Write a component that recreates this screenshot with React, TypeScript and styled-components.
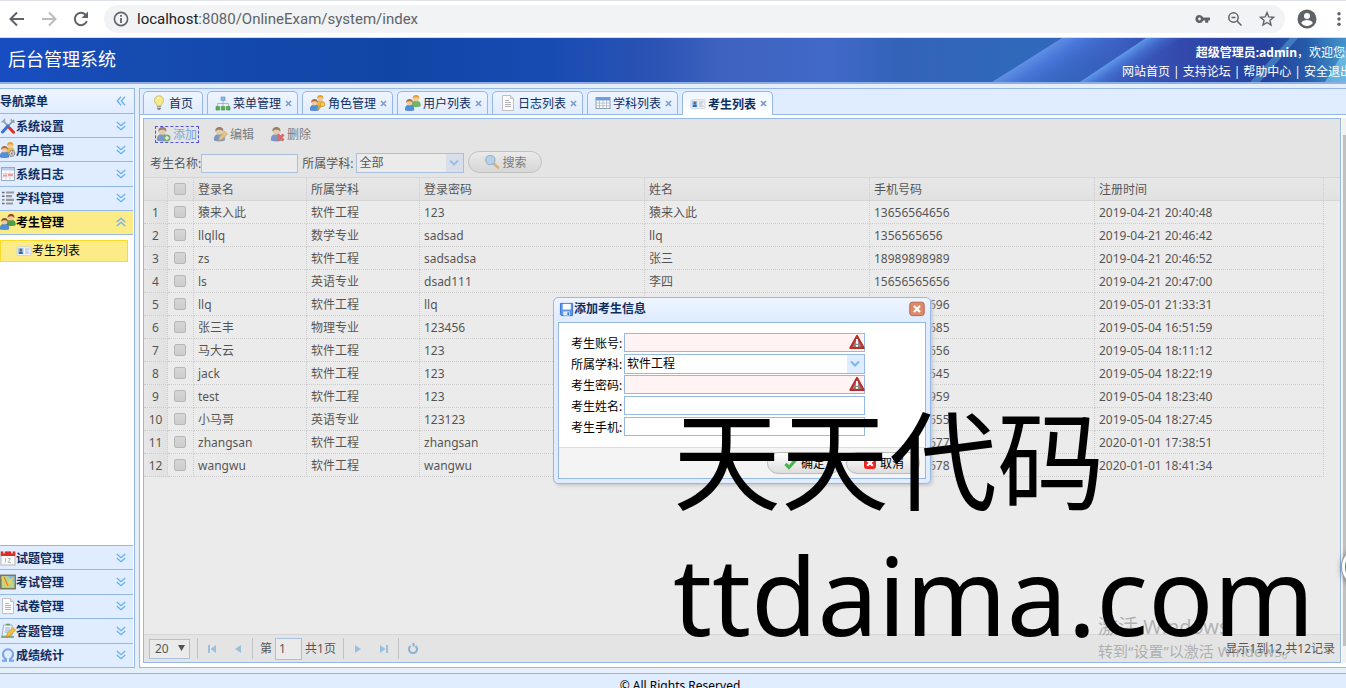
import React from "react";
import styled, { createGlobalStyle, css } from "styled-components";

const GlobalStyle = createGlobalStyle`
  * { box-sizing: border-box; }
  html, body { margin: 0; overflow: hidden; }
  body {
    font: 12px/18px "Noto Sans", "Noto Sans CJK SC", sans-serif;
    color: #000;
    background: #e6eef8;
  }
  button, input, select { font: inherit; color: inherit; margin: 0; padding: 0; }
  button { background: none; border: 0; cursor: pointer; white-space: nowrap; }
  a { color: inherit; text-decoration: none; }
  svg { display: block; flex: none; }
`;

const BLUE = "#95b8e7";

const Screen = styled.div`
  position: relative;
  height: 100vh;
  overflow: hidden;
`;
const Page = styled.div`
  display: flex;
  flex-direction: column;
  width: calc(100% + 14px);
  height: calc(100vh + 15px);
`;
const Caption = styled.span`
  padding-top: 2px;
`;

/* ---------- browser bar ---------- */
const BrowserBar = styled.div`
  display: flex;
  align-items: center;
  flex: none;
  height: 38px;
  padding: 0 19px 0 8px;
  background: #fff;
  border-top: 1px solid #dee1e6;
  border-bottom: 1px solid #dadce0;
  color: #5f6368;
`;
const NavButton = styled.button<{ $dim?: boolean }>`
  width: 32px;
  display: flex;
  justify-content: flex-start;
  color: ${(p) => (p.$dim ? "#babcbe" : "#5f6368")};
`;
const AddressBar = styled.div`
  flex: 1;
  display: flex;
  align-items: center;
  height: 28px;
  margin-right: 12px;
  padding: 0 9px;
  border-radius: 14px;
  background: #f1f3f4;
`;
const Url = styled.span`
  flex: 1;
  margin-left: 8px;
  font: 15px/20px Roboto, sans-serif;
  color: #5f6368;
  b { font-weight: 400; color: #202124; }
`;
const BarIcon = styled.span`
  width: 18px;
  margin-left: 14px;
`;
const Profile = styled.button`
  margin-right: 18px;
`;

/* ---------- header ---------- */
const Header = styled.header`
  position: relative;
  flex: none;
  display: flex;
  justify-content: space-between;
  height: 46px;
  padding: 5px 8px 0 8px;
  color: #fff;
  border-bottom: 2px solid #8eafe4;
  overflow: hidden;
  background: #1547ad;
`;
const HeaderArt = styled.svg`
  position: absolute;
  inset: 0;
  width: 100%;
  height: 100%;
`;
const SiteTitle = styled.h1`
  position: relative;
  margin: 0;
  font-size: 18px;
  line-height: 32px;
  font-weight: 400;
`;
const HeaderInfo = styled.div`
  position: relative;
  text-align: right;
  line-height: 19px;
  white-space: nowrap;
`;
const Welcome = styled.div`
  margin-right: 7px;
`;
const Links = styled.nav`
  display: flex;
  justify-content: flex-end;
  a + a::before { content: "|"; margin: 0 3px; }
`;

/* ---------- main ---------- */
const Main = styled.div`
  flex: 1;
  min-height: 0;
  display: flex;
  gap: 4px;
  padding: 4px 0 5px;
`;
const Sidebar = styled.aside`
  flex: none;
  width: 135px;
  display: flex;
  flex-direction: column;
  background: #fff;
  border: solid ${BLUE};
  border-width: 1px 1px 1px 0;
`;
const SidebarTitle = styled.div`
  display: flex;
  align-items: center;
  justify-content: space-between;
  height: 25px;
  padding-right: 8px;
  font-weight: 700;
  color: #0e2d5f;
  background: linear-gradient(#eff5ff, #e0ecff);
  border-bottom: 1px solid ${BLUE};
`;
const MenuGroup = styled.div<{ $bottom?: boolean }>`
  display: grid;
  grid-auto-rows: 1fr;
  height: ${(p) => (p.$bottom ? "122px" : "121px")};
  margin-right: 1px;
  ${(p) => p.$bottom && css`margin-top: auto;`}
`;
const MenuItem = styled.button<{ $open?: boolean; $bottom?: boolean }>`
  display: flex;
  align-items: center;
  padding-right: 7px;
  font-weight: 700;
  color: ${(p) => (p.$open ? "#000" : "#0e2d5f")};
  background: ${(p) => (p.$open ? "#fbec88" : "#e0ecff")};
  border: 0 solid ${BLUE};
  ${(p) => (p.$bottom ? "border-top-width: 1px;" : "border-bottom-width: 1px;")}
  > span { flex: 1; text-align: left; }
`;
const SubItem = styled.a`
  display: flex;
  align-items: center;
  height: 22px;
  margin: 5px 6px 0 0;
  padding-left: 15px;
  background: #fbec88;
  border: 1px solid #fcdc28;
`;

const Content = styled.main`
  flex: 1;
  min-width: 0;
  display: flex;
  flex-direction: column;
  background: #fff;
  border: 1px solid ${BLUE};
`;
const TabStrip = styled.div`
  flex: none;
  display: flex;
  align-items: flex-end;
  gap: 4px;
  height: 26px;
  padding-left: 3px;
  background: #e0ecff;
  border-bottom: 1px solid ${BLUE};
`;
const Tab = styled.div<{ $active?: boolean; $home?: boolean }>`
  display: flex;
  align-items: center;
  width: ${(p) => (p.$home ? "60px" : "91px")};
  height: 23px;
  padding-left: 7px;
  border: 1px solid ${BLUE};
  border-bottom: 0;
  border-radius: 5px 5px 0 0;
  color: #0e2d5f;
  background: linear-gradient(#eff5ff, #e0ecff);
  ${(p) =>
    p.$active &&
    css`
      height: 24px;
      margin-bottom: -1px;
      font-weight: 700;
      background: linear-gradient(#eff5ff, #fff);
    `}
`;
const TabName = styled.button`
  display: flex;
  align-items: center;
  gap: 2px;
  font-weight: inherit;
`;
const TabClose = styled.button`
  width: 14px;
  display: flex;
  justify-content: center;
`;
const TabBody = styled.div`
  flex: 1;
  min-height: 0;
  display: flex;
  gap: 1px;
  padding: 3px 0 4px 3px;
`;
const Frame = styled.section`
  position: relative;
  flex: 1;
  min-width: 0;
  display: flex;
  flex-direction: column;
  border: 1px solid ${BLUE};
`;
const ScrollTrack = styled.div`
  width: 17px;
  padding: 17px 1px;
  background: #f1f1f1;
`;
const ScrollThumb = styled.div`
  height: 100%;
  background: #c1c1c1;
`;

/* ---------- toolbar ---------- */
const Toolbar = styled.div`
  flex: none;
  height: 59px;
  padding: 6px 6px 0;
  background: #f4f4f4;
  border-bottom: 1px solid #ddd;
`;
const ToolRow = styled.div`
  display: flex;
  align-items: center;
  height: 18px;
  padding-left: 5px;
  gap: 13px;
`;
const ToolButton = styled.button<{ $focus?: boolean }>`
  display: flex;
  align-items: center;
  gap: 2px;
  height: 17px;
  padding-right: 2px;
  color: ${(p) => (p.$focus ? "#3f8af0" : "#444")};
  outline: ${(p) => (p.$focus ? "1px dashed #0000e0" : "none")};
  outline-offset: -1px;
`;
const SearchRow = styled.form`
  display: flex;
  align-items: center;
  height: 22px;
  margin-top: 8px;
  label { padding-top: 3px; }
  input + label { margin: 0 3px 0 4px; }
`;
const SearchInput = styled.input`
  width: 97px;
  height: 19px;
  margin-top: 2px;
  padding: 0 2px;
  background: #fff;
  border: 1px solid ${BLUE};
`;
const SelectBox = styled.span<{ $wide?: boolean }>`
  display: flex;
  position: relative;
  width: ${(p) => (p.$wide ? "241px" : "108px")};
  height: 20px;
  margin-top: ${(p) => (p.$wide ? "0" : "2px")};
  background: linear-gradient(to left, #e0ecff 17px, #fff 17px);
  border: 1px solid ${BLUE};
  select {
    appearance: none;
    width: 100%;
    padding-left: 2px;
    border: 0;
    background: none;
    outline: 0;
  }
  svg { position: absolute; right: 3px; top: 5px; pointer-events: none; }
`;
const PillButton = styled.button`
  display: flex;
  align-items: center;
  justify-content: center;
  gap: 2px;
  width: 74px;
  height: 22px;
  margin-left: 4px;
  color: #444;
  border: 1px solid #bbb;
  border-radius: 11px;
  background: linear-gradient(#fff, #ddd);
`;

/* ---------- grid ---------- */
const GridArea = styled.div`
  flex: 1;
  min-height: 0;
  overflow: hidden;
`;
const Table = styled.table`
  width: 100%;
  table-layout: fixed;
  border-collapse: separate;
  border-spacing: 0;
  th, td {
    height: 23px;
    padding: 2px 3px 0 4px;
    text-align: left;
    font-weight: 400;
    line-height: 18px;
    white-space: nowrap;
    border: 0 dotted #ccc;
    border-width: 0 1px 1px 0;
  }
  th {
    background: linear-gradient(#f9f9f9, #efefef);
    border-bottom: 1px solid #ddd;
  }
  td:first-child { padding: 2px 0 0; text-align: center; background: linear-gradient(to right, #f9f9f9, #efefef); }
  th:nth-child(2), td:nth-child(2) { padding: 0 2px 0 0; }
  td:last-child { border: 0; }
  th:last-child { border-right: 0; }
`;
const Check = styled.input`
  && {
    display: block;
    appearance: none;
    width: 12px;
    height: 12px;
    margin: -1px auto 0;
    border: 1px solid #a9a9a9;
    border-radius: 2px;
    background: linear-gradient(#dcdcdc, #cdcdcd);
  }
`;

/* ---------- pager ---------- */
const Pager = styled.div`
  flex: none;
  display: flex;
  align-items: center;
  height: 28px;
  padding: 0 5px;
  background: #f4f4f4;
  border-top: 1px solid #ddd;
`;
const PageSize = styled.span`
  position: relative;
  margin-right: 6px;
  select {
    appearance: none;
    display: block;
    width: 41px;
    height: 20px;
    padding-left: 5px;
    border: 1px solid ${BLUE};
    background: #fff;
  }
  svg { position: absolute; right: 5px; top: 6px; pointer-events: none; }
`;
const Divider = styled.i`
  width: 1px;
  height: 21px;
  margin: 0 1px;
  background: #bbb;
`;
const PagerButton = styled.button`
  display: flex;
  justify-content: center;
  width: 26px;
`;
const PagerText = styled.label`
  display: flex;
  align-items: center;
  gap: 3px;
  padding: 0 6px;
`;
const PageInput = styled.input`
  && {
    width: 27px;
    height: 22px;
    padding: 0 3px;
    border: 1px solid ${BLUE};
    background: #fff;
  }
`;
const PageInfo = styled.span`
  margin-left: auto;
`;

/* ---------- dialog ---------- */
const Mask = styled.div`
  position: absolute;
  inset: 0;
  background: rgba(204, 204, 204, 0.4);
`;
const DialogLayer = styled.div`
  position: absolute;
  inset: 0;
  display: flex;
  align-items: center;
  justify-content: center;
`;
const Dialog = styled.div`
  width: 378px;
  padding: 4px;
  border: 1px solid ${BLUE};
  border-radius: 5px;
  background: linear-gradient(#eff5ff, #e0ecff 20px);
  box-shadow: 2px 2px 3px #ccc;
`;
const DialogTitle = styled.div`
  display: flex;
  align-items: center;
  justify-content: space-between;
  height: 20px;
  padding: 0 1px 6px;
  font-weight: 700;
  color: #0e2d5f;
  > span { display: flex; align-items: center; }
`;
const DialogBody = styled.form`
  border: 1px solid ${BLUE};
  background: #fff;
`;
const Fields = styled.div`
  padding: 9px 0 0 12px;
  height: 124px;
`;
const Field = styled.div`
  display: flex;
  align-items: center;
  height: 21px;
  label { width: 53px; flex: none; line-height: 20px; padding-top: 2px; }
`;
const FieldBox = styled.span`
  position: relative;
  display: flex;
  svg { position: absolute; right: 0; top: 1px; }
`;
const FieldInput = styled.input<{ $invalid?: boolean }>`
  width: 241px;
  height: 19px;
  padding: 0 2px;
  border: 1px solid ${BLUE};
  background: ${(p) => (p.$invalid ? "#fff3f3" : "#fff")};
`;
const DialogButtons = styled.div`
  display: flex;
  justify-content: flex-end;
  gap: 1px;
  height: 31px;
  padding: 4px 5px 0;
  background: #f4f4f4;
  border-top: 1px solid #ddd;
  button { color: #000; }
`;

const Footer = styled.footer`
  flex: none;
  height: 30px;
  padding-top: 3px;
  text-align: center;
  background: #e0ecff;
  border-top: 1px solid ${BLUE};
`;

/* ---------- overlays ---------- */
const ActivateNote = styled.div`
  position: absolute;
  right: 46px;
  bottom: 26px;
  width: 202px;
  color: rgba(120, 120, 120, 0.5);
  font-size: 15px;
  line-height: 22px;
  white-space: nowrap;
  pointer-events: none;
  strong { display: block; font-weight: 400; font-size: 20px; line-height: 26px; }
`;
const BigMark = styled.div`
  position: absolute;
  left: 673px;
  top: 394px;
  font-size: 108px;
  line-height: 134px;
  white-space: nowrap;
  pointer-events: none;
`;
const FloatBall = styled.div`
  position: absolute;
  right: -36px;
  top: 547px;
  width: 40px;
  height: 40px;
  border-radius: 50%;
  border: 3px solid #fff;
  background: #1fa463;
  box-shadow: 0 0 0 1px #999, 0 1px 6px rgba(0, 0, 0, 0.5);
`;

/* ---------- icons ---------- */
type IconName =
  | "bulb" | "sitemap" | "userkey" | "users" | "page" | "table" | "card" | "tools"
  | "usergear" | "calendarlog" | "list" | "couple" | "calendar" | "map" | "note"
  | "omega" | "useradd" | "useredit" | "userdel" | "search" | "save" | "ok" | "cancel" | "warn";

const person = (x: number, y: number, hair: string, body: string, k = 1) => (
  <g transform={`translate(${x} ${y}) scale(${k})`}>
    <path d="M0 11c0-4 1.500-5 4.500-5S9 7 9 11c-2 1.200-7 1.200-9 0z" fill={body} stroke="#0003" strokeWidth=".6" />
    <circle cx="4.500" cy="3.600" r="2.900" fill="#f3c99a" />
    <path d="M1.200 4C.8 1.200 2.500 0 4.500 0s3.800 1.200 3.300 4C7 2.500 5.500 2.300 4.500 2.300S2 2.500 1.200 4z" fill={hair} />
  </g>
);

const drawings: Record<IconName, React.ReactNode> = {
  bulb: (
    <>
      <path d="M8 .8a4.600 4.600 0 0 0-4.600 4.600c0 2.400 2.300 3.300 2.600 5.600h4c.3-2.300 2.600-3.200 2.600-5.600A4.600 4.600 0 0 0 8 .8z" fill="#f6e98a" stroke="#c9b552" strokeWidth=".8" />
      <path d="M6.300 4c.3-1 1-1.500 2-1.600" stroke="#fff" strokeWidth="1.200" fill="none" />
      <path d="M6 11.300h4v2.400L8.800 15H7.200L6 13.700z" fill="#8e8e8e" />
      <path d="M6 12.500h4" stroke="#ddd" strokeWidth=".7" />
    </>
  ),
  sitemap: (
    <>
      <path d="M8 5v4M2.500 11V8.500h11V11M8 8v3" stroke="#9aa9ba" strokeWidth=".8" fill="none" />
      <rect x="6" y="2" width="4" height="3.500" fill="#8fb4e4" stroke="#7098cc" strokeWidth=".7" />
      <path d="M1 11.500h3.500V15H1zM6.300 11.500h3.500V15H6.300zM11.500 11.500H15V15h-3.500z" fill="#5bb052" stroke="#3c8a38" strokeWidth=".6" />
    </>
  ),
  userkey: (
    <>
      {person(6, 0, "#e0a22c", "#e8b84a", 0.95)}
      {person(0, 4, "#a8703c", "#4f8fe0")}
      <path d="M7.500 14.500l4.500-4.700" stroke="#d99e22" strokeWidth="2" />
      <circle cx="12.600" cy="9.300" r="2.200" fill="#f7cf50" stroke="#d99e22" />
    </>
  ),
  users: (
    <>
      {person(6.500, 0, "#e0a22c", "#6cba60", 1)}
      {person(0, 4, "#a8703c", "#4f8fe0")}
    </>
  ),
  page: (
    <>
      <path d="M2.500.5h8l3 3v12h-11z" fill="#fbfbfb" stroke="#c0c0c0" />
      <path d="M10.500.5v3h3" fill="#e4e4e4" stroke="#c0c0c0" />
      <path d="M5 5.500h4M5 7.500h6M5 9.500h6M5 11.500h6" stroke="#b5b5b5" />
    </>
  ),
  table: (
    <>
      <rect x="1" y="2.500" width="14" height="11" fill="#fff" stroke="#8d9db5" />
      <path d="M1 2.500h14v3H1z" fill="#6f9bd8" />
      <path d="M1 8h14M1 10.700h14M4.500 5.500v8M8 5.500v8M11.500 5.500v8" stroke="#a9b3c4" strokeWidth=".8" />
    </>
  ),
  card: (
    <>
      <rect x="1" y="3.800" width="14" height="8.600" rx="1" fill="#f3f5f9" stroke="#c3cbd6" strokeWidth=".8" />
      <rect x="2.200" y="5" width="5.200" height="6" fill="#8dbdf2" />
      <circle cx="4.800" cy="7" r="1.300" fill="#8a5a3a" />
      <path d="M2.800 11c0-1.800.9-2.400 2-2.400s2 .6 2 2.400z" fill="#2f66b4" />
      <path d="M9 6h4.500M9 8h3.500M9 10h4.500" stroke="#a5afbc" strokeWidth=".9" />
    </>
  ),
  tools: (
    <>
      <path d="M3 2.500l9.500 10.500" stroke="#9aa5b0" strokeWidth="2" />
      <path d="M1.500 3.500a2.200 2.200 0 0 0 3-2.700" stroke="#98a4ae" strokeWidth="1.500" fill="none" />
      <path d="M9.500 10l4 4.200" stroke="#d8302e" strokeWidth="3" strokeLinecap="round" />
      <path d="M14 2L8.500 7.500" stroke="#8593a0" strokeWidth="1.600" />
      <path d="M8 8l-5.500 6" stroke="#3a6fd0" strokeWidth="3" strokeLinecap="round" />
      <path d="M11.500 1c-1 2 1 3.800 3.200 2.800" stroke="#98a4ae" strokeWidth="1.500" fill="none" />
    </>
  ),
  usergear: (
    <>
      {person(6, 0, "#e0a22c", "#e8b84a", 0.95)}
      {person(0, 4, "#a8703c", "#4f8fe0")}
      <circle cx="11.800" cy="11.500" r="2.800" fill="#ddd" stroke="#888" strokeWidth="1.400" strokeDasharray="1.500 .7" />
      <circle cx="11.800" cy="11.500" r="1" fill="#777" />
    </>
  ),
  calendarlog: (
    <>
      <rect x="1.500" y="1.500" width="13" height="13" fill="#fff" stroke="#9dabc0" />
      <path d="M2 2h12v2.500H2z" fill="#b9cdea" />
      <path d="M2 7.500h12M2 11h12M6 5v9M10 5v9" stroke="#d3d9e2" />
      <path d="M3 8.500h4v2H3zM8 8h5v2H8z" fill="#f29a9a" />
    </>
  ),
  list: (
    <>
      <path d="M2 2.500h2.500M2 6.200h2.500M2 9.900h2.500M2 13.500h2.500" stroke="#666" strokeWidth="1.400" />
      <path d="M6 2.500h8M6 6.200h6M6 9.900h8M6 13.500h7" stroke="#999" strokeWidth="2.200" />
    </>
  ),
  couple: (
    <>
      {person(6.500, 0, "#9c3d24", "#4d9e48")}
      {person(0, 4, "#7b5a37", "#4f8fe0")}
    </>
  ),
  calendar: (
    <>
      <rect x="1" y="2" width="14" height="13" fill="#fafafa" stroke="#aaa" strokeWidth=".8" />
      <path d="M.8 1.500h14.400V6H.8z" fill="#dd2c24" />
      <path d="M4 .5v3M12 .5v3" stroke="#fff" strokeWidth="1.300" />
      <path d="M5.500 8v4.500M8 8.500h2.500L8 12.500h3" stroke="#bbb" fill="none" />
    </>
  ),
  map: (
    <>
      <rect x=".8" y="1.300" width="14.400" height="13.400" fill="#b5d690" stroke="#77745e" strokeWidth="1.500" />
      <path d="M8 2h6.500v7z" fill="#7fb8ea" />
      <path d="M2 3l5 9 6-8" stroke="#f3d046" strokeWidth="2" fill="none" />
      <path d="M4 3l4 9" stroke="#e0763f" strokeWidth="1.200" />
    </>
  ),
  note: (
    <>
      <path d="M3.500 2h8.500v11h-10z" fill="#eef3fa" stroke="#8aa0bd" strokeWidth=".8" />
      <path d="M5 5h5M5 7h5M4.500 9h4" stroke="#8db0dc" />
      <path d="M6 1.500h4M1 14h13" stroke="#6d9a58" strokeWidth="1.500" />
      <path d="M6.500 14l1-4L13 4.500l2.500 2.500-5.500 5.800z" fill="#f5c242" stroke="#c08a1a" strokeWidth=".7" />
    </>
  ),
  omega: (
    <path d="M2 13.700h4v-1.500C3.800 10.800 3 9.200 3 7.200 3 4.200 5.200 2.300 8 2.300s5 1.900 5 4.900c0 2-.8 3.600-3 5v1.500h4" fill="none" stroke="#7aa2e6" strokeWidth="2" />
  ),
  useradd: (
    <>
      {person(2, 1, "#7a4a20", "#4377c4", 1.200)}
      <circle cx="12" cy="12" r="3.500" fill="#3f9a3a" />
      <path d="M12 10v4M10 12h4" stroke="#fff" strokeWidth="1.400" />
    </>
  ),
  useredit: (
    <>
      {person(2, 1, "#7a4a20", "#4377c4", 1.200)}
      <path d="M6.500 14.500l1-3.500L12.700 5.500 15.500 8l-5.700 5.700z" fill="#f2bd52" stroke="#b77d1c" strokeWidth=".7" />
    </>
  ),
  userdel: (
    <>
      {person(2, 1, "#7a4a20", "#4377c4", 1.200)}
      <path d="M8.500 8.500l6 6M14.500 8.500l-6 6" stroke="#e02a2a" strokeWidth="3" />
    </>
  ),
  search: (
    <>
      <path d="M9.500 9.500l4.500 4" stroke="#e39a3b" strokeWidth="2.600" strokeLinecap="round" />
      <circle cx="6.300" cy="6" r="4.600" fill="#a9d4fa" stroke="#7ba6d2" strokeWidth="1.400" />
    </>
  ),
  save: (
    <>
      <path d="M1.500 1.500h13v13h-12l-1-1z" fill="#5b98f2" stroke="#3c70c6" />
      <rect x="4" y="2" width="8.500" height="6" fill="#fff" />
      <rect x="4.500" y="10" width="7" height="4.500" fill="#dfe8f5" />
      <rect x="9" y="11" width="1.600" height="3" fill="#3b6fc2" />
    </>
  ),
  ok: <path d="M2.500 8.800L6 12.500 13.500 4" fill="none" stroke="#45b84c" strokeWidth="3.200" />,
  cancel: (
    <>
      <rect x="2" y="2" width="12" height="12" rx="3" fill="#ee2420" />
      <path d="M5.200 5.200l5.600 5.600M10.800 5.200l-5.600 5.600" stroke="#fff" strokeWidth="2.200" />
    </>
  ),
  warn: (
    <>
      <path d="M8 1.700L14.800 14H1.200z" fill="#c4413c" stroke="#b3302c" strokeWidth="1.800" strokeLinejoin="round" />
      <path d="M8 4.500l4.300 8.300H3.700z" fill="#8d8a8a" />
      <path d="M8 5v4.800M8 11v1.800" stroke="#fff" strokeWidth="2" />
    </>
  ),
};

const Icon = ({ name, size = 16 }: { name: IconName; size?: number }) => (
  <svg width={size} height={size} viewBox="0 0 16 16" aria-hidden="true">{drawings[name]}</svg>
);
const Chevrons = ({ turn = 0 }: { turn?: number }) => (
  <svg width="10" height="10" viewBox="0 0 10 10" fill="none" stroke="#68b0ee" strokeWidth="1.300" aria-hidden="true">
    <path transform={`rotate(${turn} 5 5)`} d="M.8 1L5 4.700 9.200 1M.8 5L5 8.700 9.200 5" />
  </svg>
);
const SelectArrow = () => (
  <svg width="12" height="8" viewBox="0 0 12 8" fill="none" stroke="#78b6ee" strokeWidth="2" aria-hidden="true">
    <path d="M2 1.500l4 4 4-4" />
  </svg>
);
const PagerIcon = ({ d, loop }: { d: string; loop?: boolean }) => (
  <svg width="16" height="16" viewBox="0 0 16 16" aria-hidden="true"
    fill={loop ? "none" : "#7ab8e6"} stroke={loop ? "#5b9fd2" : "none"} strokeWidth="2">
    <path d={d} />
  </svg>
);

/* ---------- data ---------- */
const topMenu: [IconName, string][] = [
  ["tools", "系统设置"], ["usergear", "用户管理"], ["calendarlog", "系统日志"], ["list", "学科管理"], ["couple", "考生管理"],
];
const bottomMenu: [IconName, string][] = [
  ["calendar", "试题管理"], ["map", "考试管理"], ["page", "试卷管理"], ["note", "答题管理"], ["omega", "成绩统计"],
];
const tabs: [IconName, string][] = [
  ["bulb", "首页"], ["sitemap", "菜单管理"], ["userkey", "角色管理"], ["users", "用户列表"],
  ["page", "日志列表"], ["table", "学科列表"], ["card", "考生列表"],
];
const columns = ["登录名", "所属学科", "登录密码", "姓名", "手机号码", "注册时间"];
const rows = [
  ["猿来入此", "软件工程", "123", "猿来入此", "13656564656", "2019-04-21 20:40:48"],
  ["llqllq", "数学专业", "sadsad", "llq", "1356565656", "2019-04-21 20:46:42"],
  ["zs", "软件工程", "sadsadsa", "张三", "18989898989", "2019-04-21 20:46:52"],
  ["ls", "英语专业", "dsad111", "李四", "15656565656", "2019-04-21 20:47:00"],
  ["llq", "软件工程", "llq", "", "13656565696", "2019-05-01 21:33:31"],
  ["张三丰", "物理专业", "123456", "", "13656565685", "2019-05-04 16:51:59"],
  ["马大云", "软件工程", "123", "", "13656565656", "2019-05-04 18:11:12"],
  ["jack", "软件工程", "123", "", "13656565545", "2019-05-04 18:22:19"],
  ["test", "软件工程", "123", "", "13656565959", "2019-05-04 18:23:40"],
  ["小马哥", "英语专业", "123123", "", "13656565655", "2019-05-04 18:27:45"],
  ["zhangsan", "软件工程", "zhangsan", "", "13656565677", "2020-01-01 17:38:51"],
  ["wangwu", "软件工程", "wangwu", "", "13656565678", "2020-01-01 18:41:34"],
];

const Browser = () => (
  <BrowserBar>
    <NavButton aria-label="后退">
      <svg width="18" height="18" viewBox="0 0 18 18" fill="none" stroke="currentColor" strokeWidth="2"><path d="M16 9H3M9 2.500L2.500 9 9 15.500" /></svg>
    </NavButton>
    <NavButton aria-label="前进" $dim>
      <svg width="18" height="18" viewBox="0 0 18 18" fill="none" stroke="currentColor" strokeWidth="2"><path d="M2 9h13M9 2.500L15.500 9 9 15.500" /></svg>
    </NavButton>
    <NavButton aria-label="重新加载">
      <svg width="18" height="18" viewBox="0 0 18 18" fill="none" stroke="currentColor" strokeWidth="2"><path d="M14.800 11.200A6.200 6.200 0 1 1 13.600 4.800L15 6.200" /><path d="M16 1.500V8H9.500z" fill="currentColor" stroke="none" /></svg>
    </NavButton>
    <AddressBar>
      <svg width="16" height="16" viewBox="0 0 16 16" fill="none" stroke="currentColor" strokeWidth="1.600"><circle cx="8" cy="8" r="6.600" /><path d="M8 7v5M8 4v1.800" strokeWidth="1.800" /></svg>
      <Url><b>localhost</b>:8080/OnlineExam/system/index</Url>
      <BarIcon>
        <svg width="18" height="18" viewBox="0 0 18 18"><path fillRule="evenodd" d="M5.500 5a4 4 0 1 0 3.700 5.400h2v2.400h3v-2.400h1.800V7.600H9.200A4 4 0 0 0 5.500 5zm0 2.600a1.400 1.400 0 1 1 0 2.800 1.400 1.400 0 0 1 0-2.800z" fill="currentColor" /></svg>
      </BarIcon>
      <BarIcon>
        <svg width="18" height="18" viewBox="0 0 18 18" fill="none" stroke="currentColor" strokeWidth="1.500"><circle cx="7.500" cy="7.500" r="4.700" /><path d="M11 11l4.500 4.500M5.500 7.500h4" /></svg>
      </BarIcon>
      <BarIcon>
        <svg width="18" height="18" viewBox="0 0 18 18" fill="none" stroke="currentColor" strokeWidth="1.400"><path d="M9 2.500l1.800 4.400 4.700.4-3.600 3.100 1.100 4.600L9 12.500 5 15l1.100-4.600L2.500 7.300l4.700-.4z" /></svg>
      </BarIcon>
    </AddressBar>
    <Profile aria-label="用户">
      <svg width="20" height="20" viewBox="0 0 20 20"><circle cx="10" cy="10" r="9.500" fill="#5f6368" /><circle cx="10" cy="7" r="3" fill="#fff" /><path d="M4.200 14c1-2.300 3.500-3 5.800-3s4.800.7 5.800 3c-2.700 4-8.900 4-11.600 0z" fill="#fff" /></svg>
    </Profile>
    <button aria-label="菜单">
      <svg width="6" height="18" viewBox="0 0 6 18" fill="#5f6368"><circle cx="4" cy="3.700" r="1.700" /><circle cx="4" cy="9" r="1.700" /><circle cx="4" cy="14.300" r="1.700" /></svg>
    </button>
  </BrowserBar>
);

const Banner = () => (
  <Header>
    <HeaderArt viewBox="0 0 1360 44" preserveAspectRatio="none" aria-hidden="true">
      <defs>
        <linearGradient id="base">
          <stop offset="0" stopColor="#174dc2" />
          <stop offset=".1" stopColor="#164bb0" />
          <stop offset=".29" stopColor="#1145a5" />
          <stop offset=".4" stopColor="#174bb2" />
          <stop offset=".48" stopColor="#2a53b4" />
          <stop offset=".53" stopColor="#3e62bf" />
          <stop offset=".61" stopColor="#4169c8" />
          <stop offset=".66" stopColor="#3363b9" />
          <stop offset=".76" stopColor="#3069bb" />
          <stop offset=".82" stopColor="#3a5fc0" />
          <stop offset=".87" stopColor="#3349ac" />
          <stop offset=".93" stopColor="#24429d" />
          <stop offset=".96" stopColor="#265aa8" />
          <stop offset="1" stopColor="#4fa8d8" />
        </linearGradient>
        <linearGradient id="ray1" gradientUnits="userSpaceOnUse" x1="992" y1="44" x2="1015" y2="80">
          <stop offset="0" stopColor="#6f9cf2" stopOpacity=".75" />
          <stop offset=".3" stopColor="#4f7ee6" stopOpacity=".7" />
          <stop offset="1" stopColor="#3f62cc" stopOpacity="0" />
        </linearGradient>
        <linearGradient id="ray2" gradientUnits="userSpaceOnUse" x1="1080" y1="44" x2="1092" y2="62">
          <stop offset="0" stopColor="#68a8f4" stopOpacity=".8" />
          <stop offset=".45" stopColor="#4b78dc" stopOpacity=".6" />
          <stop offset="1" stopColor="#4360c8" stopOpacity="0" />
        </linearGradient>
      </defs>
      <rect width="1360" height="44" fill="url(#base)" />
      <path d="M992 44L1062 0h82l-70 44z" fill="url(#ray1)" />
      <path d="M1080 44L1146 0h36l-66 44z" fill="url(#ray2)" />
      <path d="M1250 44L1290 0h8l-38 44z" fill="#58a8dc" opacity=".5" />
      <path d="M1325 44L1352 0h8v44z" fill="#7fd0ee" opacity=".6" />
    </HeaderArt>
    <SiteTitle>后台管理系统</SiteTitle>
    <HeaderInfo>
      <Welcome><b>超级管理员:admin</b>，欢迎您</Welcome>
      <Links>
        <a href="#home">网站首页</a>
        <a href="#forum">支持论坛</a>
        <a href="#help">帮助中心</a>
        <a href="#exit">安全退出</a>
      </Links>
    </HeaderInfo>
  </Header>
);

const Navigation = () => (
  <Sidebar>
    <SidebarTitle><Caption>导航菜单</Caption><Chevrons turn={90} /></SidebarTitle>
    <MenuGroup>
      {topMenu.map(([icon, text], i) => (
        <MenuItem key={text} $open={i === 4}>
          <Icon name={icon} /><Caption>{text}</Caption><Chevrons turn={i === 4 ? 180 : 0} />
        </MenuItem>
      ))}
    </MenuGroup>
    <SubItem href="#students"><Icon name="card" />考生列表</SubItem>
    <MenuGroup $bottom>
      {bottomMenu.map(([icon, text]) => (
        <MenuItem key={text} $bottom>
          <Icon name={icon} /><Caption>{text}</Caption><Chevrons />
        </MenuItem>
      ))}
    </MenuGroup>
  </Sidebar>
);

const StudentGrid = () => (
  <GridArea>
    <Table>
      <colgroup>
        <col width="24" /><col width="26" /><col width="113" /><col width="113" />
        <col width="225" /><col width="225" /><col width="225" /><col /><col width="16" />
      </colgroup>
      <thead>
        <tr>
          <th />
          <th><Check type="checkbox" aria-label="全选" /></th>
          {columns.map((c) => <th key={c}>{c}</th>)}
          <th />
        </tr>
      </thead>
      <tbody>
        {rows.map((r, i) => (
          <tr key={i}>
            <td>{i + 1}</td>
            <td><Check type="checkbox" aria-label={r[0]} /></td>
            {r.map((c, j) => <td key={j}>{c}</td>)}
            <td />
          </tr>
        ))}
      </tbody>
    </Table>
  </GridArea>
);

const AddDialog = () => (
  <DialogLayer>
    <Dialog role="dialog" aria-labelledby="dialog-title">
      <DialogTitle>
        <span id="dialog-title"><Icon name="save" size={15} />添加考生信息</span>
        <button aria-label="关闭">
          <svg width="16" height="16" viewBox="0 0 16 16">
            <rect x=".8" y="1.200" width="14.400" height="13.400" rx="2.500" fill="#dc8a68" stroke="#b8664a" />
            <path d="M5 5l6 6M11 5l-6 6" stroke="#fff" strokeWidth="2.200" />
          </svg>
        </button>
      </DialogTitle>
      <DialogBody>
        <Fields>
          <Field>
            <label htmlFor="account">考生账号:</label>
            <FieldBox><FieldInput id="account" $invalid /><Icon name="warn" /></FieldBox>
          </Field>
          <Field>
            <label htmlFor="subject">所属学科:</label>
            <SelectBox $wide><select id="subject"><option>软件工程</option></select><SelectArrow /></SelectBox>
          </Field>
          <Field>
            <label htmlFor="password">考生密码:</label>
            <FieldBox><FieldInput id="password" type="password" $invalid /><Icon name="warn" /></FieldBox>
          </Field>
          <Field>
            <label htmlFor="name">考生姓名:</label>
            <FieldInput id="name" />
          </Field>
          <Field>
            <label htmlFor="mobile">考生手机:</label>
            <FieldInput id="mobile" />
          </Field>
        </Fields>
        <DialogButtons>
          <PillButton type="button"><Icon name="ok" /><Caption>确定</Caption></PillButton>
          <PillButton type="button"><Icon name="cancel" /><Caption>取消</Caption></PillButton>
        </DialogButtons>
      </DialogBody>
    </Dialog>
  </DialogLayer>
);

export default function App() {
  return (
    <Screen>
      <GlobalStyle />
      <Page>
        <Browser />
        <Banner />
        <Main>
          <Navigation />
          <Content>
            <TabStrip>
              {tabs.map(([icon, text], i) => (
                <Tab key={text} $home={i === 0} $active={i === 6}>
                  <TabName><Icon name={icon} /><Caption>{text}</Caption></TabName>
                  {i > 0 && (
                    <TabClose aria-label={`关闭${text}`}>
                      <svg width="7" height="7" viewBox="0 0 7 7" stroke="#7f9cc8" strokeWidth="1.600"><path d="M1 1l5 5M6 1L1 6" /></svg>
                    </TabClose>
                  )}
                </Tab>
              ))}
            </TabStrip>
            <TabBody>
              <Frame>
                <Toolbar>
                  <ToolRow>
                    <ToolButton $focus><Icon name="useradd" /><Caption>添加</Caption></ToolButton>
                    <ToolButton><Icon name="useredit" /><Caption>编辑</Caption></ToolButton>
                    <ToolButton><Icon name="userdel" /><Caption>删除</Caption></ToolButton>
                  </ToolRow>
                  <SearchRow>
                    <label htmlFor="q-name">考生名称:</label>
                    <SearchInput id="q-name" />
                    <label htmlFor="q-subject">所属学科:</label>
                    <SelectBox><select id="q-subject"><option>全部</option></select><SelectArrow /></SelectBox>
                    <PillButton type="button"><Icon name="search" /><Caption>搜索</Caption></PillButton>
                  </SearchRow>
                </Toolbar>
                <StudentGrid />
                <Pager>
                  <PageSize>
                    <select aria-label="每页条数"><option>20</option></select>
                    <svg width="7" height="6" viewBox="0 0 7 6"><path d="M0 0h7L3.500 6z" /></svg>
                  </PageSize>
                  <Divider />
                  <PagerButton aria-label="首页"><PagerIcon d="M4 4h2v8H4zM12 4v8L6.500 8z" /></PagerButton>
                  <PagerButton aria-label="上一页"><PagerIcon d="M11 4v8L5 8z" /></PagerButton>
                  <Divider />
                  <PagerText>第<PageInput aria-label="页码" defaultValue="1" />共1页</PagerText>
                  <Divider />
                  <PagerButton aria-label="下一页"><PagerIcon d="M5 4v8l6-4z" /></PagerButton>
                  <PagerButton aria-label="末页"><PagerIcon d="M4 4v8l5.500-4zM10 4h2v8h-2z" /></PagerButton>
                  <Divider />
                  <PagerButton aria-label="刷新"><PagerIcon loop d="M5.500 5A4 4 0 1 0 10.500 5M8.500 2v3.500" /></PagerButton>
                  <PageInfo>显示1到12,共12记录</PageInfo>
                </Pager>
                <Mask />
                <AddDialog />
              </Frame>
              <ScrollTrack><ScrollThumb /></ScrollTrack>
            </TabBody>
          </Content>
        </Main>
        <Footer>© All Rights Reserved</Footer>
      </Page>
      <ActivateNote><strong>激活 Windows</strong>转到“设置”以激活 Windows。</ActivateNote>
      <FloatBall />
      <BigMark>天天代码<br />ttdaima.com</BigMark>
    </Screen>
  );
}
